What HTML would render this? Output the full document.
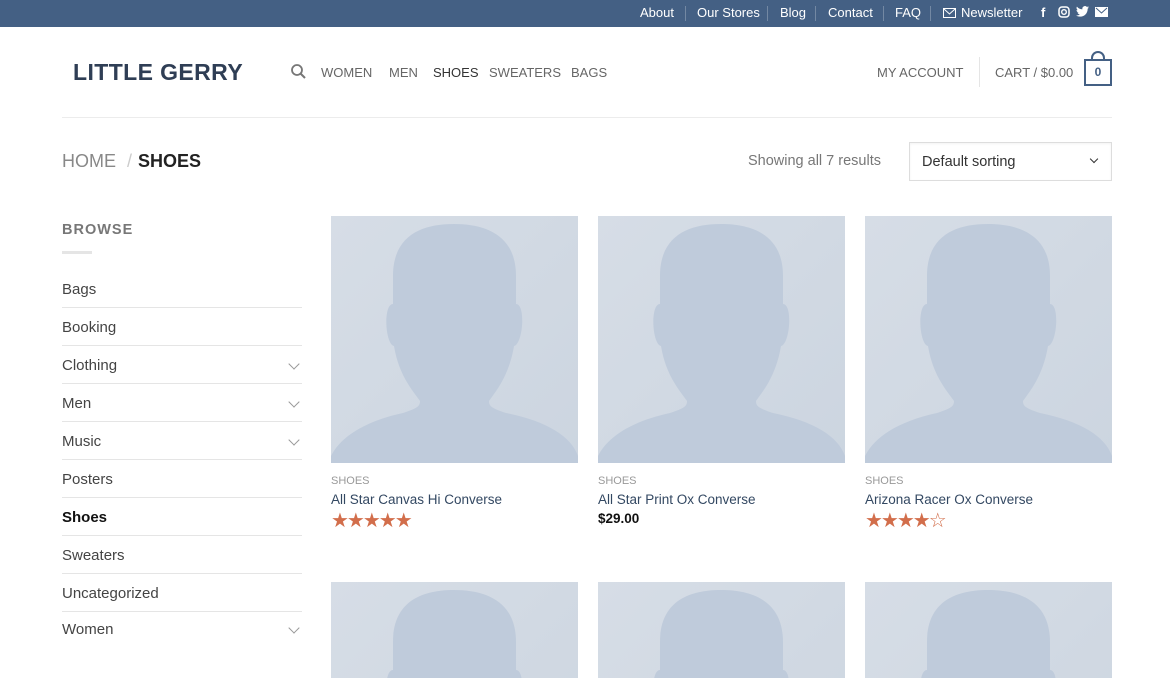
<!DOCTYPE html>
<html><head><style>
*{margin:0;padding:0;box-sizing:border-box}
html,body{width:1170px;height:678px;overflow:hidden}
body{background:#fff;font-family:"Liberation Sans",sans-serif;position:relative;color:#333}
.top{position:absolute;left:0;top:0;width:1170px;height:27px;background:#446084;color:#fff;font-size:13px}
.top span{position:absolute;top:5px}
.sep{position:absolute;top:6px;width:1px;height:15px;background:rgba(255,255,255,.25)}
.a{position:absolute;white-space:nowrap}
.nav{font-size:13px;color:#666;top:65px}
.side{position:absolute;left:62px;width:240px;font-size:15px;color:#444}
.side div{height:38px;border-bottom:1px solid #e5e5e5;line-height:40px;position:relative}
.chev{position:absolute;right:4px;top:14px;width:8px;height:8px;border-right:1.3px solid #999;border-bottom:1.3px solid #999;transform:rotate(45deg)}
.card{position:absolute;width:247px}
.img{width:247px;height:247px;background:linear-gradient(135deg,#d6dde6,#ccd5e0)}
.cat{font-size:11px;color:#999;margin-top:12px}
.ttl{font-size:13.5px;color:#334862;margin-top:5px}
.stars{color:#d26e4b;font-size:20px;letter-spacing:-2px;margin-top:2px;line-height:24px}
</style></head><body>
<div class="top">
<span style="left:640px">About</span><div class="sep" style="left:685px"></div>
<span style="left:697px">Our Stores</span><div class="sep" style="left:767px"></div>
<span style="left:780px">Blog</span><div class="sep" style="left:815px"></div>
<span style="left:828px">Contact</span><div class="sep" style="left:883px"></div>
<span style="left:895px">FAQ</span><div class="sep" style="left:930px"></div>
<svg style="position:absolute;left:943px;top:8px" width="13" height="10"><rect x=".5" y=".5" width="12" height="9" fill="none" stroke="#fff"/><path d="M1 1l5.5 5 5.5-5" stroke="#fff" fill="none"/></svg>
<span style="left:961px">Newsletter</span>
<span style="left:1041px;font-weight:bold">f</span>
<svg style="position:absolute;left:1058px;top:6px" width="12" height="12"><rect x="1" y="1" width="10" height="10" rx="3" fill="none" stroke="#fff" stroke-width="1.5"/><circle cx="6" cy="6" r="2.3" fill="none" stroke="#fff" stroke-width="1.4"/></svg>
<svg style="position:absolute;left:1076px;top:6px" width="13" height="11" viewBox="0 0 24 20"><path fill="#fff" d="M24 2.4a10 10 0 0 1-2.8.8A5 5 0 0 0 23.3.4a10 10 0 0 1-3.1 1.2A4.9 4.9 0 0 0 11.8 6 14 14 0 0 1 1.7.9a4.9 4.9 0 0 0 1.5 6.6A5 5 0 0 1 1 6.9a4.9 4.9 0 0 0 3.9 4.8 5 5 0 0 1-2.2.1 4.9 4.9 0 0 0 4.6 3.4A10 10 0 0 1 0 17.3 14 14 0 0 0 7.5 19.5c9 0 14-7.5 14-14v-.6A10 10 0 0 0 24 2.4z"/></svg>
<svg style="position:absolute;left:1095px;top:7px" width="13" height="10"><rect width="13" height="10" fill="#fff"/><path d="M1 1l5.5 5 5.5-5" stroke="#446084" fill="none"/></svg>
</div>
<div class="a" style="left:73px;top:59px;font-size:23px;font-weight:bold;color:#2f3e55;letter-spacing:.4px">LITTLE GERRY</div>
<svg style="position:absolute;left:291px;top:64px" width="15" height="15"><circle cx="6" cy="6" r="5" fill="none" stroke="#777" stroke-width="1.8"/><path d="M9.5 9.5l4.5 4.5" stroke="#777" stroke-width="2"/></svg>
<div class="a nav" style="left:321px">WOMEN</div>
<div class="a nav" style="left:389px">MEN</div>
<div class="a nav" style="left:433px;color:#333">SHOES</div>
<div class="a nav" style="left:489px">SWEATERS</div>
<div class="a nav" style="left:571px">BAGS</div>
<div class="a nav" style="left:877px">MY ACCOUNT</div>
<div style="position:absolute;left:979px;top:57px;width:1px;height:30px;background:#e5e5e5"></div>
<div class="a nav" style="left:995px">CART / $0.00</div>
<div style="position:absolute;left:1084px;top:59px;width:28px;height:27px;border:2px solid #446084;font-size:12px;font-weight:bold;color:#446084;text-align:center;line-height:23px">0</div>
<div style="position:absolute;left:1091px;top:51px;width:14px;height:10px;border:2px solid #446084;border-bottom:none;border-radius:7px 7px 0 0"></div>
<div style="position:absolute;left:62px;top:117px;width:1050px;height:1px;background:#ececec"></div>
<div class="a" style="left:62px;top:151px;font-size:18px;color:#888">HOME <span style="color:#ccc;margin:0 6px">/</span><span style="color:#222;font-weight:bold">SHOES</span></div>
<div class="a" style="left:748px;top:153px;font-size:14.5px;color:#777">Showing all 7 results</div>
<div style="position:absolute;left:909px;top:142px;width:203px;height:39px;border:1px solid #ddd;font-size:14.5px;color:#333;padding:11px 12px;box-shadow:inset 0 1px 2px rgba(0,0,0,.05)">Default sorting<div class="chev" style="right:14px;top:13px;width:6px;height:6px;border-color:#333"></div></div>
<div class="a" style="left:62px;top:222px;font-size:14.5px;font-weight:bold;color:#777;letter-spacing:1px">BROWSE</div>
<div style="position:absolute;left:62px;top:251px;width:30px;height:3px;background:#e5e5e5"></div>
<div class="side" style="top:270px">
<div>Bags</div><div>Booking</div><div>Clothing<i class="chev"></i></div><div>Men<i class="chev"></i></div><div>Music<i class="chev"></i></div><div>Posters</div><div style="font-weight:bold;color:#111">Shoes</div><div>Sweaters</div><div>Uncategorized</div><div style="border:none;height:34px;line-height:36px">Women<i class="chev" style="top:12px"></i></div>
</div>
<svg width="0" height="0" style="position:absolute"><defs><g id="sil"><path fill="#bfcbdb" d="M62 60C62 20 90 8 123 8S185 20 185 60V88C195 88 192 128 183 130 178 160 165 175 158 185 158 190 160 192 175 197 215 205 240 220 247 240V247H0V240C10 220 35 205 72 197 87 192 89 190 89 185 82 175 68 160 63 130 54 128 52 88 62 88Z"/></g></defs></svg>
<div class="card" style="left:331px;top:216px"><div class="img"><svg width="247" height="247"><use href="#sil"/></svg></div><div class="cat">SHOES</div><div class="ttl">All Star Canvas Hi Converse</div><div class="stars">★★★★★</div></div>
<div class="card" style="left:598px;top:216px"><div class="img"><svg width="247" height="247"><use href="#sil"/></svg></div><div class="cat">SHOES</div><div class="ttl">All Star Print Ox Converse</div><div style="font-size:13.5px;font-weight:bold;color:#111;margin-top:4px">$29.00</div></div>
<div class="card" style="left:865px;top:216px"><div class="img"><svg width="247" height="247"><use href="#sil"/></svg></div><div class="cat">SHOES</div><div class="ttl">Arizona Racer Ox Converse</div><div class="stars">★★★★☆</div></div>
<div class="card" style="left:331px;top:582px"><div class="img"><svg width="247" height="247"><use href="#sil"/></svg></div></div>
<div class="card" style="left:598px;top:582px"><div class="img"><svg width="247" height="247"><use href="#sil"/></svg></div></div>
<div class="card" style="left:865px;top:582px"><div class="img"><svg width="247" height="247"><use href="#sil"/></svg></div></div>
</body></html>
